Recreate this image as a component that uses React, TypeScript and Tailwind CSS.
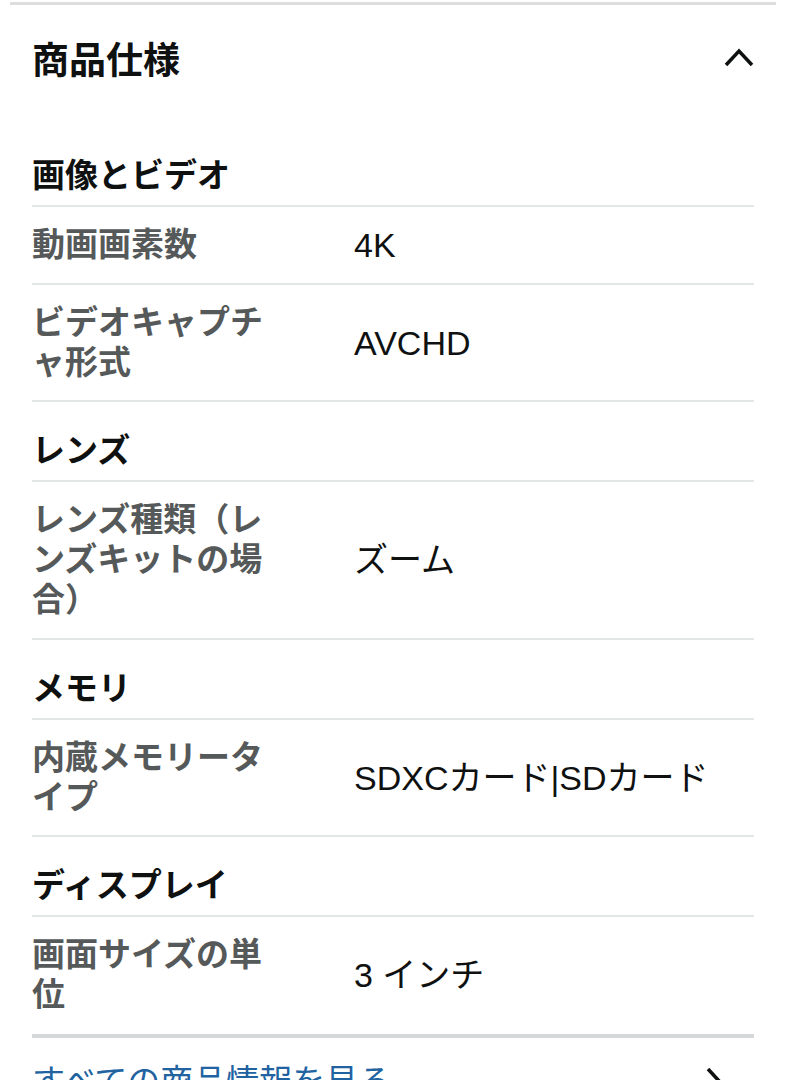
import { ReactNode } from "react";

const font = { fontFamily: '"Liberation Sans", "Noto Sans CJK JP", sans-serif' };

// 仕様データ
const sections: { title: string; rows: { label: ReactNode; value: string }[] }[] = [
    {
        title: "画像とビデオ",
        rows: [
            { label: "動画画素数", value: "4K" },
            { label: "ビデオキャプチャ形式", value: "AVCHD" },
        ],
    },
    {
        title: "レンズ",
        rows: [{ label: "レンズ種類（レンズキットの場合）", value: "ズーム" }],
    },
    {
        title: "メモリ",
        rows: [{ label: "内蔵メモリータイプ", value: "SDXCカード|SDカード" }],
    },
    {
        title: "ディスプレイ",
        rows: [{ label: "画面サイズの単位", value: "3 インチ" }],
    },
];

function SpecRow({ label, value, last }: { label: ReactNode; value: string; last?: boolean }) {
    return (
        <div className={`flex items-center pt-[18px] ${last ? "pb-[19px]" : "pb-[17.5px] border-b-2 border-[#e3e6e6]"}`}>
            <div className="w-[250px] shrink-0 text-[33px] leading-[40px] font-semibold text-[#565959] break-all">
                {label}
            </div>
            <div className="ml-[72px] text-[34px] leading-[34px] text-[#0f1111]">{value}</div>
        </div>
    );
}

export default function App() {
    return (
        <div className="min-h-screen bg-white overflow-hidden" style={font}>
            <div className="mx-[10px] mt-[2px] h-[3px] bg-[#dddddd]" />

            <div className="px-[32px]">
                {/* 見出し */}
                <div className="flex items-center justify-between pt-[34px] pb-[71px]">
                    <h2 className="text-[37px] leading-[46px] font-bold text-[#0f1111]">商品仕様</h2>
                    <svg width="32" height="22" viewBox="0 0 32 22" className="mr-[-1px] -translate-y-[5px]">
                        <path d="M3 19 L16 5 L29 19" fill="none" stroke="#0f1111" strokeWidth="3.5" />
                    </svg>
                </div>

                {sections.map((s, i) => (
                    <div key={s.title}>
                        <div
                            className={`border-b-2 border-[#e3e6e6] pb-[9px] text-[33px] leading-[40px] font-bold text-[#0f1111] ${
                                i === 0 ? "pt-0" : "pt-[29px]"
                            }`}
                        >
                            {s.title}
                        </div>
                        {s.rows.map((r, j) => (
                            <SpecRow
                                key={j}
                                label={r.label}
                                value={r.value}
                                last={i === sections.length - 1 && j === s.rows.length - 1}
                            />
                        ))}
                    </div>
                ))}

                <div className="h-[4px] bg-[#d5d9d9]" />

                {/* リンク */}
                <div className="flex items-center justify-between pt-[24px]">
                    <span className="text-[33px] leading-[40px] text-[#2162a1]">すべての商品情報を見る</span>
                    <svg width="20" height="32" viewBox="0 0 20 32" className="mr-[30px]">
                        <path d="M4 3 L16 16 L4 29" fill="none" stroke="#0f1111" strokeWidth="3.5" />
                    </svg>
                </div>
            </div>
        </div>
    );
}
